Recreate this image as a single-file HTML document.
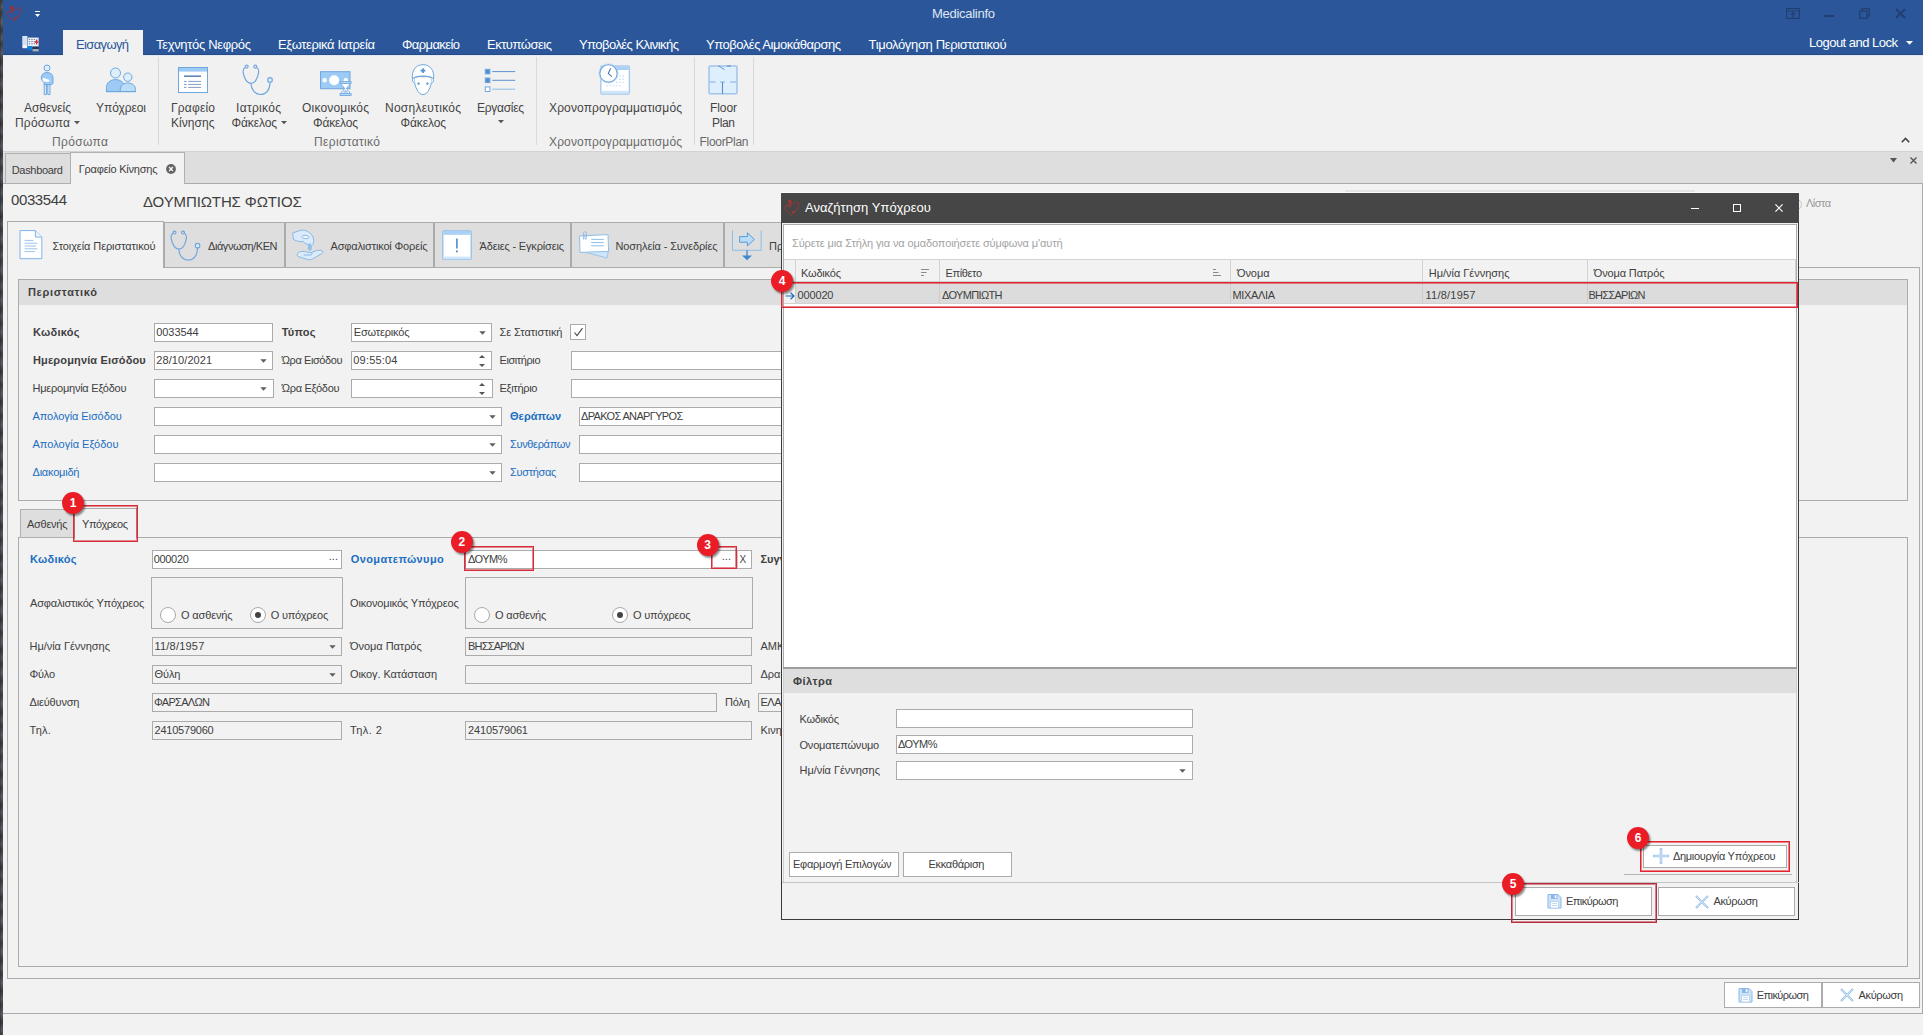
<!DOCTYPE html>
<html lang="el"><head><meta charset="utf-8"><title>Medicalinfo</title>
<style>
html,body{margin:0;padding:0;}
body{width:1923px;height:1035px;overflow:hidden;position:relative;background:#f2f2f2;font-family:"Liberation Sans", sans-serif;}
.a{position:absolute;box-sizing:border-box;}
.t{position:absolute;white-space:pre;line-height:1;font-family:"Liberation Sans", sans-serif;}

</style></head><body>
<div class="a" style="left:0px;top:0px;width:3px;height:1035px;background:#34373b;background-image:repeating-linear-gradient(180deg,#3a3c40 0,#55585d 7px,#3b3d41 13px,#5a5d62 22px,#35373b 31px);"></div>
<div class="a" style="left:0px;top:0px;width:1px;height:1035px;background:rgba(20,20,22,.25);"></div>
<div class="a" style="left:3px;top:0px;width:1920px;height:55px;background:#2b579a;"></div>
<svg class="a" style="left:6px;top:5px;" width="17" height="17" viewBox="0 0 17 17"><g fill="none" stroke="#b52a2e" stroke-width="0.9" stroke-linecap="round" opacity="0.85"><path d="M7.5 15.8 C3.5 13 0.6 10 1.2 7.6 C1.8 5.6 4.6 5.8 6 7.2"/><path d="M7.5 15.8 C11.5 12.5 15.2 8.2 14.8 4.6 C14.4 2.4 11.6 2.6 10.4 4"/><path d="M2 6.8 L6.8 6 L10.2 3.6 M6.6 6.2 L5.8 8.6"/><ellipse cx="5.9" cy="2.9" rx="1.7" ry="2.3" transform="rotate(-25 5.9 2.9)" fill="#c0281f" stroke="none"/><circle cx="9.4" cy="13.3" r="1.2" fill="#b52a2e" stroke="none"/><path d="M9.6 13 L12 11.2"/></g></svg>
<div class="a" style="left:35px;top:11px;width:5px;height:1px;background:#fff;"></div>
<svg class="a" style="left:35px;top:14px;" width="5" height="3" viewBox="0 0 5 3"><path d="M0 0 H5 L2.5 3 Z" fill="#fff"/></svg>
<span class="t" style="left:932px;top:7px;font-size:13px;color:#dfe6f2;letter-spacing:-0.277px;">Medicalinfo</span>
<svg class="a" style="left:1786px;top:8px;" width="14" height="11" viewBox="0 0 14 11"><g fill="none" stroke="#223f73" stroke-width="1.2"><rect x="0.6" y="0.6" width="12.8" height="9.8"/><path d="M0.6 3 H13.4 M7 9.5 V4.5 M4.8 6.6 L7 4.5 L9.2 6.6"/></g></svg>
<div class="a" style="left:1824px;top:15px;width:10px;height:2px;background:#223f73;"></div>
<svg class="a" style="left:1859px;top:8px;" width="11" height="11" viewBox="0 0 11 11"><g fill="none" stroke="#223f73" stroke-width="1.3"><rect x="0.7" y="3" width="7.3" height="7.3"/><path d="M3 3 V0.7 H10.3 V8 H8"/></g></svg>
<svg class="a" style="left:1895px;top:8px;" width="11" height="11" viewBox="0 0 11 11"><path d="M1 1 L10 10 M10 1 L1 10" stroke="#223f73" stroke-width="2" fill="none"/></svg>
<div class="a" style="left:63px;top:30px;width:80px;height:26px;background:#f1f1f1;"></div>
<svg class="a" style="left:22px;top:35px;" width="18" height="17" viewBox="0 0 18 17"><rect x="0.3" y="1" width="5.2" height="12.2" rx="0.8" fill="#e3ebf7"/><path d="M1 3 H4.8 M1 5 H4.8 M1 7 H4.8 M1 9 H4.8" stroke="#b9c9e4" stroke-width="0.7"/><rect x="1" y="10.6" width="3.6" height="1.6" fill="#fff"/><rect x="6" y="2.6" width="10.6" height="9" fill="#eef2fa"/><path d="M6.8 4.4 H13 M6.8 6.6 H13 M6.8 8.8 H13" stroke="#5b6f9a" stroke-width="0.9" stroke-dasharray="1.4 1.1"/><path d="M12.8 7 H16.4 M14.6 4.6 V9.4" stroke="#e02430" stroke-width="1.3"/><rect x="5.6" y="11" width="4.6" height="4" fill="#0a80da"/><rect x="10.6" y="11.6" width="6" height="2.4" fill="#2a3350"/><rect x="10.6" y="14" width="6" height="2.4" fill="#a9adb6"/></svg>
<span class="t" style="left:76px;top:38px;font-size:13px;color:#2b579a;letter-spacing:-0.641px;">Εισαγωγή</span>
<span class="t" style="left:156px;top:38px;font-size:13px;color:#ffffff;letter-spacing:-0.329px;">Τεχνητός Νεφρός</span>
<span class="t" style="left:278px;top:38px;font-size:13px;color:#ffffff;letter-spacing:-0.375px;">Εξωτερικά Ιατρεία</span>
<span class="t" style="left:402px;top:38px;font-size:13px;color:#ffffff;letter-spacing:-0.588px;">Φαρμακείο</span>
<span class="t" style="left:487px;top:38px;font-size:13px;color:#ffffff;letter-spacing:-0.481px;">Εκτυπώσεις</span>
<span class="t" style="left:579px;top:38px;font-size:13px;color:#ffffff;letter-spacing:-0.548px;">Υποβολές Κλινικής</span>
<span class="t" style="left:706px;top:38px;font-size:13px;color:#ffffff;letter-spacing:-0.470px;">Υποβολές Αιμοκάθαρσης</span>
<span class="t" style="left:868.6px;top:38px;font-size:13px;color:#ffffff;letter-spacing:-0.346px;">Τιμολόγηση Περιστατικού</span>
<span class="t" style="left:1809px;top:36px;font-size:13px;color:#ffffff;letter-spacing:-0.510px;">Logout and Lock</span>
<svg class="a" style="left:1906px;top:41px;" width="7" height="4" viewBox="0 0 7 4"><path d="M0 0 H7 L3.5 3.8 Z" fill="#fff"/></svg>
<div class="a" style="left:3px;top:55px;width:1920px;height:96px;background:#f1f1f1;"></div>
<div class="a" style="left:3px;top:54px;width:1920px;height:1px;background:#2a4b82;"></div>
<div class="a" style="left:3px;top:55px;width:1920px;height:1px;background:#dfe8f6;"></div>
<div class="a" style="left:3px;top:56px;width:1920px;height:1px;background:#eef1f6;"></div>
<div class="a" style="left:63px;top:54px;width:80px;height:3px;background:#f1f1f1;"></div>
<div class="a" style="left:3px;top:151px;width:1920px;height:1px;background:#d2d2d2;"></div>
<div class="a" style="left:158px;top:57px;width:1px;height:88px;background:#dadada;"></div>
<div class="a" style="left:536px;top:57px;width:1px;height:88px;background:#dadada;"></div>
<div class="a" style="left:694px;top:57px;width:1px;height:88px;background:#dadada;"></div>
<div class="a" style="left:753px;top:57px;width:1px;height:88px;background:#dadada;"></div>
<span class="t" style="left:24px;top:102px;font-size:12px;color:#444444;letter-spacing:-0.033px;">Ασθενείς</span>
<span class="t" style="left:15px;top:117px;font-size:12px;color:#444444;letter-spacing:0.195px;">Πρόσωπα</span>
<svg class="a" style="left:74px;top:121px;" width="6" height="4" viewBox="0 0 6 4"><path d="M0 0 H6 L3 3.2 Z" fill="#555"/></svg>
<span class="t" style="left:96px;top:102px;font-size:12px;color:#444444;letter-spacing:-0.065px;">Υπόχρεοι</span>
<span class="t" style="left:171px;top:102px;font-size:12px;color:#444444;letter-spacing:0.193px;">Γραφείο</span>
<span class="t" style="left:171px;top:117px;font-size:12px;color:#444444;letter-spacing:0.047px;">Κίνησης</span>
<span class="t" style="left:236px;top:102px;font-size:12px;color:#444444;letter-spacing:0.310px;">Ιατρικός</span>
<span class="t" style="left:231.5px;top:117px;font-size:12px;color:#444444;letter-spacing:-0.107px;">Φάκελος</span>
<svg class="a" style="left:281px;top:121px;" width="6" height="4" viewBox="0 0 6 4"><path d="M0 0 H6 L3 3.2 Z" fill="#555"/></svg>
<span class="t" style="left:302px;top:102px;font-size:12px;color:#444444;letter-spacing:0.191px;">Οικονομικός</span>
<span class="t" style="left:313px;top:117px;font-size:12px;color:#444444;letter-spacing:-0.190px;">Φάκελος</span>
<span class="t" style="left:385px;top:102px;font-size:12px;color:#444444;letter-spacing:0.267px;">Νοσηλευτικός</span>
<span class="t" style="left:400.5px;top:117px;font-size:12px;color:#444444;letter-spacing:-0.107px;">Φάκελος</span>
<span class="t" style="left:477px;top:102px;font-size:12px;color:#444444;letter-spacing:-0.283px;">Εργασίες</span>
<svg class="a" style="left:497.5px;top:120px;" width="6" height="4" viewBox="0 0 6 4"><path d="M0 0 H6 L3 3.2 Z" fill="#555"/></svg>
<span class="t" style="left:549px;top:102px;font-size:12px;color:#444444;letter-spacing:0.132px;">Χρονοπρογραμματισμός</span>
<span class="t" style="left:710px;top:102px;font-size:12px;color:#444444;letter-spacing:-0.086px;">Floor</span>
<span class="t" style="left:712px;top:117px;font-size:12px;color:#444444;letter-spacing:-0.344px;">Plan</span>
<span class="t" style="left:52px;top:136px;font-size:12px;color:#6a6a6a;letter-spacing:0.362px;">Πρόσωπα</span>
<span class="t" style="left:314px;top:136px;font-size:12px;color:#6a6a6a;letter-spacing:0.364px;">Περιστατικό</span>
<span class="t" style="left:549px;top:136px;font-size:12px;color:#6a6a6a;letter-spacing:0.132px;">Χρονοπρογραμματισμός</span>
<span class="t" style="left:699.5px;top:136px;font-size:12px;color:#6a6a6a;letter-spacing:-0.295px;">FloorPlan</span>
<svg class="a" style="left:1901px;top:137px;" width="9" height="6" viewBox="0 0 9 6"><path d="M0.8 5.2 L4.5 1.5 L8.2 5.2" stroke="#444" stroke-width="1.6" fill="none"/></svg>
<svg class="a" style="left:38px;top:62px;" width="18" height="35" viewBox="38 62 18 35"><g stroke="#6ea6de" stroke-width="1" stroke-linejoin="round">
<circle cx="47" cy="68" r="3" fill="#ddeefc"/>
<path d="M44.2 84 V94.6 H46.4 V85 H47.8 V94.6 H50 V84 Z" fill="#ddeefc"/>
<path d="M41.3 78 C41.3 74.5 43.5 72.6 47 72.6 C50.8 72.6 53 74.5 53 78 V82.5 C53 84 52 84.6 51 84.6 H44.2 V82 C42.4 81.6 41.3 80.2 41.3 78 Z" fill="#9ecbf5"/>
<path d="M42.6 79.6 C42.6 78.4 43.6 77.8 44.6 78.3 L49 79.8 C49.8 80.2 49.6 81.8 48.6 81.8 H44.6 C43.4 81.8 42.6 81 42.6 79.6 Z" fill="#fff" stroke="none"/>
</g></svg>
<svg class="a" style="left:104px;top:66px;" width="34" height="28" viewBox="104 66 34 28"><g stroke="#6ea6de" stroke-width="1">
<circle cx="115.5" cy="73" r="5" fill="#ddeefc"/>
<path d="M106.4 91.5 V87.5 C106.4 82.8 110.3 79.6 115.5 79.6 C120.7 79.6 124.6 82.8 124.6 87.5 V91.5 Z" fill="#9ecbf5"/>
<circle cx="127.8" cy="77.2" r="4.2" fill="#ddeefc"/>
<path d="M120.3 91.5 V89.5 C120.3 85.5 123.5 83 127.9 83 C132.3 83 135.4 85.5 135.4 89.5 V91.5 Z" fill="#b9dcf9"/>
<path d="M106 91.6 H135.8" stroke-width="1.2"/>
</g></svg>
<svg class="a" style="left:176px;top:65px;" width="34" height="30" viewBox="176 65 34 30"><rect x="178.5" y="67.5" width="29" height="25" fill="#fff" stroke="#6ea6de" stroke-width="1"/>
<rect x="179" y="68" width="28" height="3.6" fill="#9ecbf5"/>
<path d="M184 76.2 H201" stroke="#5f86b8" stroke-width="1.6"/>
<path d="M184 81.4 H186.6 M188.2 81.4 H201 M184 84.4 H186.6 M188.2 84.4 H201 M184 87.4 H186.6 M188.2 87.4 H201" stroke="#7f9fc8" stroke-width="1"/></svg>
<svg class="a" style="left:242.2px;top:64px;" width="32.0" height="32.0" viewBox="0 0 32 32"><g fill="none" stroke="#6ea6de" stroke-width="1.15" stroke-linecap="round">
<circle cx="4.6" cy="2.6" r="1.5"/><circle cx="13.2" cy="2.6" r="1.5"/>
<path d="M3.2 3.4 C0.8 4.5 0.8 8.5 2.2 12.5 C3.6 16.5 6 19.3 9 19.3 C12 19.3 14.3 16.5 15.6 12.5 C17 8.5 17 4.5 14.6 3.4"/>
<path d="M9 19.3 C9 25.5 13 30.5 18.5 30.5 C24 30.5 28 26 28 18.3"/>
<circle cx="28" cy="15.9" r="2.3" fill="#ddeefc"/>
</g></svg>
<svg class="a" style="left:318px;top:69px;" width="36" height="29" viewBox="318 69 36 29"><rect x="320.5" y="71.7" width="29.5" height="17" fill="#9ecbf5" stroke="#6ea6de" stroke-width="1"/>
<circle cx="334.2" cy="80.2" r="5" fill="#fff"/><circle cx="324.6" cy="80.2" r="2.2" fill="#fff"/><circle cx="345.8" cy="80.2" r="2.2" fill="#fff"/>
<path d="M340 81.6 H351.2 V83.4 H340 Z M340 93.6 H351.2 V95.5 H340 Z" fill="#cfe5fa" stroke="#6ea6de" stroke-width="0.9"/>
<path d="M341.4 83.4 H349.8 C349.8 86.4 346.6 87 346.6 88.5 C346.6 90 349.8 90.6 349.8 93.6 H341.4 C341.4 90.6 344.6 90 344.6 88.5 C344.6 87 341.4 86.4 341.4 83.4 Z" fill="#fff" stroke="#6ea6de" stroke-width="0.9"/>
<path d="M343 92.8 C343.5 91 345 90.6 345.6 89.6 C346.2 90.6 347.7 91 348.2 92.8 Z" fill="#9ecbf5"/></svg>
<svg class="a" style="left:409px;top:62px;" width="28" height="35" viewBox="409 62 28 35"><g stroke="#6ea6de" stroke-width="1" fill="none" stroke-linejoin="round">
<path d="M414.3 78.5 C414.3 86 418 94.6 423 94.6 C428 94.6 431.7 86 431.7 78.5" fill="#fff"/>
<path d="M414.3 77.5 C412 77.2 411.8 82.5 414.6 83.2 M431.7 77.5 C434 77.2 434.2 82.5 431.4 83.2" fill="#fff"/>
<path d="M412.4 78.6 C411.6 70 416 64.7 423 64.7 C430 64.7 434.4 70 433.6 78.6 L431.8 77.8 C430 75.8 416 75.8 414.2 77.8 Z" fill="#fff"/>
<path d="M414.2 77.6 C418 75.6 428 75.6 431.8 77.6" />
<path d="M420.6 70.6 H425.4 M423 68.2 V73" stroke-width="1.6" stroke="#4f8fd0"/>
<circle cx="418.6" cy="83.6" r="0.9" fill="#6ea6de"/><circle cx="427.4" cy="83.6" r="0.9" fill="#6ea6de"/>
</g></svg>
<svg class="a" style="left:483px;top:67px;" width="34" height="27" viewBox="483 67 34 27"><g stroke="#6ea6de" stroke-width="1">
<rect x="485.3" y="69.3" width="4.6" height="4.6" fill="#4f8fd0"/><rect x="485.3" y="78" width="4.6" height="4.6" fill="#4f8fd0"/><rect x="485.3" y="86.9" width="4.6" height="4.6" fill="#fff"/>
<path d="M492.2 71.6 H515.2 M492.2 80.3 H515.2" stroke="#5f93cf"/><path d="M492.2 89.2 H515.2" stroke="#8fbdea"/>
</g></svg>
<svg class="a" style="left:597px;top:62px;" width="36" height="35" viewBox="597 62 36 35"><rect x="600.8" y="66" width="28.6" height="28" rx="1.2" fill="#fff" stroke="#a9c9ee" stroke-width="1.4"/>
<rect x="601.5" y="66.6" width="27.2" height="3.4" fill="#a9d0f5"/><rect x="601.5" y="90.8" width="27.2" height="2.6" fill="#cfe5fa"/>
<g fill="#d5e6f8"><rect x="619.2" y="75.2" width="1.6" height="1.6"/><rect x="622.4" y="75.2" width="1.6" height="1.6"/>
<rect x="619.2" y="78.4" width="1.6" height="1.6"/><rect x="622.4" y="78.4" width="1.6" height="1.6"/>
<rect x="616" y="81.6" width="1.6" height="1.6"/><rect x="619.2" y="81.6" width="1.6" height="1.6"/><rect x="622.4" y="81.6" width="1.6" height="1.6"/>
<rect x="606.2" y="84.8" width="1.6" height="1.6"/><rect x="609.4" y="84.8" width="1.6" height="1.6"/><rect x="612.6" y="84.8" width="1.6" height="1.6"/><rect x="615.8" y="84.8" width="1.6" height="1.6"/><rect x="619" y="84.8" width="1.6" height="1.6"/></g>
<circle cx="608.5" cy="73.4" r="8.8" fill="#fff" stroke="#6ea6de" stroke-width="1.4"/>
<circle cx="608.5" cy="73.4" r="9.6" fill="none" stroke="#bcd9f6" stroke-width="0.8"/>
<path d="M610.6 68.2 L608.3 73.4 L611.8 76.6" fill="none" stroke="#4a78b0" stroke-width="1.1"/></svg>
<svg class="a" style="left:706px;top:63px;" width="34" height="34" viewBox="706 63 34 34"><rect x="709" y="66" width="28" height="27.8" rx="1" fill="#ddeefc" stroke="#a3c4ea" stroke-width="1.5"/>
<path d="M709 82 H715.5 M720 82 H725 M730 82 H737" stroke="#a3c4ea" stroke-width="1.6"/>
<path d="M722.5 82 V94" stroke="#5f8cc8" stroke-width="1.1"/>
<path d="M718 65.6 L724.7 69.6" stroke="#5f8cc8" stroke-width="0.9"/><path d="M726.8 66 H731" stroke="#7b9fd0" stroke-width="1.6"/></svg>
<div class="a" style="left:3px;top:152px;width:1920px;height:32px;background:#dedede;"></div>
<div class="a" style="left:3px;top:183px;width:1920px;height:1px;background:#ababab;"></div>
<div class="a" style="left:5px;top:153px;width:66px;height:31px;background:#dedede;border:1px solid #b0b0b0;"></div>
<span class="t" style="left:11.75px;top:165px;font-size:11px;color:#404040;letter-spacing:-0.322px;">Dashboard</span>
<div class="a" style="left:70px;top:152px;width:115px;height:32px;background:#f2f2f2;border:1px solid #b0b0b0;border-bottom:none;"></div>
<span class="t" style="left:78.75px;top:164px;font-size:11px;color:#404040;letter-spacing:-0.228px;">Γραφείο Κίνησης</span>
<svg class="a" style="left:166px;top:164px;" width="10" height="10" viewBox="0 0 10 10"><circle cx="5" cy="5" r="4.9" fill="#636363"/><path d="M3.1 3.1 L6.9 6.9 M6.9 3.1 L3.1 6.9" stroke="#f2f2f2" stroke-width="1.4"/></svg>
<svg class="a" style="left:1890px;top:158px;" width="7" height="5" viewBox="0 0 7 5"><path d="M0 0 H7 L3.5 4.5 Z" fill="#555"/></svg>
<svg class="a" style="left:1910px;top:157px;" width="7" height="7" viewBox="0 0 7 7"><path d="M0.5 0.5 L6.5 6.5 M6.5 0.5 L0.5 6.5" stroke="#555" stroke-width="1.4"/></svg>
<div class="a" style="left:3px;top:184px;width:1920px;height:851px;background:#f2f2f2;"></div>
<div class="a" style="left:1922px;top:184px;width:1px;height:830px;background:#ababab;"></div>
<span class="t" style="left:11px;top:192px;font-size:15px;color:#404040;letter-spacing:-0.401px;">0033544</span>
<span class="t" style="left:143px;top:194px;font-size:15px;color:#404040;letter-spacing:-0.109px;">ΔΟΥΜΠΙΩΤΗΣ ΦΩΤΙΟΣ</span>
<div class="a" style="left:1345px;top:190px;width:350px;height:3px;background:#e4e4e4;"></div>
<div class="a" style="left:1790.5px;top:199px;width:11px;height:11px;background:#f2f2f2;border:1px solid #c4c4c4;border-radius:50%;"></div>
<span class="t" style="left:1806px;top:198px;font-size:11px;color:#9a9a9a;letter-spacing:-0.535px;">Λίστα</span>
<div class="a" style="left:7px;top:267px;width:1913px;height:712px;background:#f2f2f2;border:1px solid #ababab;"></div>
<div class="a" style="left:164px;top:222px;width:121px;height:46px;background:#dedede;border:1px solid #ababab;"></div>
<div class="a" style="left:285px;top:222px;width:149px;height:46px;background:#dedede;border:1px solid #ababab;"></div>
<div class="a" style="left:434px;top:222px;width:137px;height:46px;background:#dedede;border:1px solid #ababab;"></div>
<div class="a" style="left:571px;top:222px;width:153px;height:46px;background:#dedede;border:1px solid #ababab;"></div>
<div class="a" style="left:724px;top:222px;width:76px;height:46px;background:#dedede;border:1px solid #ababab;"></div>
<div class="a" style="left:7px;top:221px;width:157px;height:47px;background:#f2f2f2;border:1px solid #ababab;border-bottom:none;"></div>
<span class="t" style="left:52.5px;top:241px;font-size:11px;color:#404040;letter-spacing:-0.087px;">Στοιχεία Περιστατικού</span>
<span class="t" style="left:208px;top:241px;font-size:11px;color:#404040;letter-spacing:-0.439px;">Διάγνωση/ΚΕΝ</span>
<span class="t" style="left:330.5px;top:241px;font-size:11px;color:#404040;letter-spacing:-0.163px;">Ασφαλιστικοί Φορείς</span>
<span class="t" style="left:479.5px;top:241px;font-size:11px;color:#404040;letter-spacing:-0.164px;">Άδειες - Εγκρίσεις</span>
<span class="t" style="left:615.5px;top:241px;font-size:11px;color:#404040;letter-spacing:-0.116px;">Νοσηλεία - Συνεδρίες</span>
<span class="t" style="left:769px;top:241px;font-size:11px;color:#404040;">Πρ</span>
<svg class="a" style="left:18px;top:228px;" width="27" height="34" viewBox="18 228 27 34"><path d="M20 230.6 H35.4 L41.8 237 V258.7 H20 Z" fill="#fff" stroke="#7fb2e8" stroke-width="1"/>
<path d="M35.4 230.6 V237 H41.8" fill="#eef6fd" stroke="#7fb2e8" stroke-width="1"/>
<path d="M24.6 240.4 H33.5 M24.6 243.2 H37.4 M24.6 246 H36 M24.6 248.8 H37.4 M24.6 251.6 H35" stroke="#8fbdea" stroke-width="0.9"/></svg>
<svg class="a" style="left:170.2px;top:229.6px;" width="31.52" height="31.52" viewBox="0 0 32 32"><g fill="none" stroke="#6ea6de" stroke-width="1.15" stroke-linecap="round">
<circle cx="4.6" cy="2.6" r="1.5"/><circle cx="13.2" cy="2.6" r="1.5"/>
<path d="M3.2 3.4 C0.8 4.5 0.8 8.5 2.2 12.5 C3.6 16.5 6 19.3 9 19.3 C12 19.3 14.3 16.5 15.6 12.5 C17 8.5 17 4.5 14.6 3.4"/>
<path d="M9 19.3 C9 25.5 13 30.5 18.5 30.5 C24 30.5 28 26 28 18.3"/>
<circle cx="28" cy="15.9" r="2.3" fill="#ddeefc"/>
</g></svg>
<svg class="a" style="left:290px;top:227px;" width="36" height="36" viewBox="290 227 36 36"><g stroke="#7fb2e8" stroke-width="0.9" fill="#dcebfa" stroke-linejoin="round">
<path d="M292.6 232.9 L300.5 230.4 C304 229.6 308.5 231 311.2 234.2 C313.2 236.6 314.2 239.6 313.4 243.2 C313 244.6 312.2 245.2 311.2 245.3 V249 C311.2 250.8 308.6 250.8 308.6 249 V244.4 C306 244 304.6 243.2 303.2 241.6 C299.8 241.8 296.6 241.2 293.6 239.6 Z"/>
<ellipse cx="305.4" cy="237" rx="3.8" ry="1.6" fill="#f3f8fe" transform="rotate(6 305.4 237)"/>
<path d="M308.9 243.6 H310.9 V249 C310.9 250.2 308.9 250.2 308.9 249 Z" fill="#8ec0f0" stroke="none"/>
<path d="M297.2 254.4 C297.4 252.4 300.6 251.2 304.4 251.5 C307 251.7 309 252.9 311.6 252.6 L316.4 250.6 C318.6 250 321.8 250.2 322.8 251.4 C323.2 252.2 322.6 253 321.6 253.6 L312.6 258.9 C311 259.9 308.6 259.9 306.8 259.3 L299 256.8 C297.8 256.4 297.1 255.6 297.2 254.4 Z"/>
<path d="M303.6 255 H310.4 C312.4 255 312.6 253 311.4 252.7" fill="none"/>
</g></svg>
<svg class="a" style="left:440px;top:228px;" width="34" height="34" viewBox="440 228 34 34"><rect x="442.8" y="231" width="28.4" height="28.2" rx="1.2" fill="#fff" stroke="#93bfec" stroke-width="1.3"/>
<rect x="443.5" y="231.6" width="27" height="3.2" fill="#a9d0f5"/><rect x="443.5" y="256.6" width="27" height="2.2" fill="#cfe5fa"/>
<path d="M456.9 238.6 V248.6" stroke="#5a90d2" stroke-width="1.7"/><circle cx="456.9" cy="251.4" r="1.05" fill="#5a90d2"/></svg>
<svg class="a" style="left:577px;top:229px;" width="35" height="32" viewBox="577 229 35 32"><path d="M580.5 251 L607 258 L609 248 Z" fill="#cfe5fa" stroke="#8fbdea" stroke-width="0.8"/>
<path d="M579.5 236 L608 234.6 L608.6 251.4 L580 252.4 Z" fill="#fff" stroke="#8fbdea" stroke-width="1"/>
<path d="M591.2 239.4 H603.8 M591.2 242.6 H603.8 M591.2 245.8 H603.8" stroke="#8fbdea" stroke-width="1"/>
<path d="M583.4 239.6 V233.4 C583.4 231.2 586.4 231.2 586.4 233.4 V238.4 C586.4 239.8 584.9 239.8 584.9 238.4 V234.6" fill="none" stroke="#7fb2e8" stroke-width="0.8"/></svg>
<svg class="a" style="left:730px;top:228px;" width="34" height="34" viewBox="730 228 34 34"><path d="M732.5 230.3 V250.3 H761.2 V230.3" fill="none" stroke="#8fbdea" stroke-width="1"/>
<path d="M739.6 236.6 H747.4 V232.8 L754.4 239.4 L747.4 246 V242.2 H739.6 Z" fill="#b9dcf9" stroke="#5b9bd5" stroke-width="1"/>
<path d="M747 250.3 V256" stroke="#3f87cf" stroke-width="1.3"/><path d="M742 255.4 H752 L747 260.2 Z" fill="#3f87cf"/></svg>
<div class="a" style="left:18px;top:279px;width:1890px;height:222px;background:#f2f2f2;border:1px solid #ababab;"></div>
<div class="a" style="left:19px;top:280px;width:1888px;height:24.5px;background:#dedede;"></div>
<span class="t" style="left:28px;top:287px;font-size:11px;color:#404040;font-weight:bold;letter-spacing:0.662px;">Περιστατικό</span>
<span class="t" style="left:33px;top:327px;font-size:11px;color:#404040;font-weight:bold;letter-spacing:0.263px;">Κωδικός</span>
<div class="a" style="left:154px;top:323px;width:119px;height:19px;background:#fff;border:1px solid #ababab;"></div>
<span class="t" style="left:156.2px;top:327px;font-size:11px;color:#404040;letter-spacing:-0.055px;">0033544</span>
<span class="t" style="left:281.75px;top:327px;font-size:11px;color:#404040;font-weight:bold;letter-spacing:0.219px;">Τύπος</span>
<div class="a" style="left:351px;top:323px;width:141px;height:19px;background:#fff;border:1px solid #ababab;"></div>
<span class="t" style="left:353.75px;top:327px;font-size:11px;color:#404040;letter-spacing:-0.172px;">Εσωτερικός</span>
<svg class="a" style="left:478.5px;top:330.5px;" width="7" height="4" viewBox="0 0 7 4"><path d="M0.3 0.2 H6.7 L3.5 3.7 Z" fill="#5e5e5e"/></svg>
<span class="t" style="left:499.5px;top:327px;font-size:11px;color:#404040;letter-spacing:-0.048px;">Σε Στατιστική</span>
<div class="a" style="left:570px;top:324px;width:16px;height:16px;background:#fff;border:1px solid #ababab;"></div>
<svg class="a" style="left:572.5px;top:327px;" width="11" height="10" viewBox="0 0 11 10"><path d="M1.5 5.5 L4 8.5 L9.5 1.2" stroke="#444" stroke-width="1.1" fill="none"/></svg>
<span class="t" style="left:33px;top:355px;font-size:11px;color:#404040;font-weight:bold;letter-spacing:0.144px;">Ημερομηνία Εισόδου</span>
<div class="a" style="left:154px;top:351px;width:119px;height:19px;background:#fff;border:1px solid #ababab;"></div>
<span class="t" style="left:156.2px;top:355px;font-size:11px;color:#404040;letter-spacing:0.104px;">28/10/2021</span>
<svg class="a" style="left:259.5px;top:358.5px;" width="7" height="4" viewBox="0 0 7 4"><path d="M0.3 0.2 H6.7 L3.5 3.7 Z" fill="#5e5e5e"/></svg>
<span class="t" style="left:281.75px;top:355px;font-size:11px;color:#404040;letter-spacing:-0.416px;">Ώρα Εισόδου</span>
<div class="a" style="left:351px;top:351px;width:141px;height:19px;background:#fff;border:1px solid #ababab;"></div>
<span class="t" style="left:353.25px;top:355px;font-size:11px;color:#404040;letter-spacing:0.203px;">09:55:04</span>
<svg class="a" style="left:479px;top:354.5px;" width="6" height="3" viewBox="0 0 6 3"><path d="M0 3 H6 L3 0 Z" fill="#555"/></svg>
<svg class="a" style="left:479px;top:363.5px;" width="6" height="3" viewBox="0 0 6 3"><path d="M0 0 H6 L3 3 Z" fill="#555"/></svg>
<span class="t" style="left:499.5px;top:355px;font-size:11px;color:#404040;letter-spacing:-0.412px;">Εισιτήριο</span>
<div class="a" style="left:571px;top:351px;width:240px;height:19px;background:#fff;border:1px solid #ababab;"></div>
<span class="t" style="left:32.5px;top:383px;font-size:11px;color:#404040;letter-spacing:-0.232px;">Ημερομηνία Εξόδου</span>
<div class="a" style="left:154px;top:379px;width:119.5px;height:19px;background:#fff;border:1px solid #ababab;"></div>
<svg class="a" style="left:259.5px;top:386.5px;" width="7" height="4" viewBox="0 0 7 4"><path d="M0.3 0.2 H6.7 L3.5 3.7 Z" fill="#5e5e5e"/></svg>
<span class="t" style="left:281.75px;top:383px;font-size:11px;color:#404040;letter-spacing:-0.283px;">Ώρα Εξόδου</span>
<div class="a" style="left:351px;top:379px;width:141.5px;height:19px;background:#fff;border:1px solid #ababab;"></div>
<svg class="a" style="left:479px;top:382.5px;" width="6" height="3" viewBox="0 0 6 3"><path d="M0 3 H6 L3 0 Z" fill="#555"/></svg>
<svg class="a" style="left:479px;top:391.5px;" width="6" height="3" viewBox="0 0 6 3"><path d="M0 0 H6 L3 3 Z" fill="#555"/></svg>
<span class="t" style="left:499.5px;top:383px;font-size:11px;color:#404040;letter-spacing:-0.286px;">Εξιτήριο</span>
<div class="a" style="left:571px;top:379px;width:240px;height:19px;background:#fff;border:1px solid #ababab;"></div>
<span class="t" style="left:32.5px;top:411px;font-size:11px;color:#1b6ec2;letter-spacing:-0.079px;">Απολογία Εισόδου</span>
<div class="a" style="left:154px;top:407px;width:348px;height:19px;background:#fff;border:1px solid #ababab;"></div>
<svg class="a" style="left:488.5px;top:414.5px;" width="7" height="4" viewBox="0 0 7 4"><path d="M0.3 0.2 H6.7 L3.5 3.7 Z" fill="#5e5e5e"/></svg>
<span class="t" style="left:510px;top:411px;font-size:11px;color:#1b6ec2;font-weight:bold;letter-spacing:0.062px;">Θεράπων</span>
<div class="a" style="left:579px;top:407px;width:232px;height:19px;background:#fff;border:1px solid #ababab;"></div>
<span class="t" style="left:581px;top:411px;font-size:11px;color:#404040;letter-spacing:-0.654px;">ΔΡΑΚΟΣ ΑΝΑΡΓΥΡΟΣ</span>
<span class="t" style="left:32.5px;top:439px;font-size:11px;color:#1b6ec2;letter-spacing:0.011px;">Απολογία Εξόδου</span>
<div class="a" style="left:154px;top:435px;width:348px;height:19px;background:#fff;border:1px solid #ababab;"></div>
<svg class="a" style="left:488.5px;top:442.5px;" width="7" height="4" viewBox="0 0 7 4"><path d="M0.3 0.2 H6.7 L3.5 3.7 Z" fill="#5e5e5e"/></svg>
<span class="t" style="left:510px;top:439px;font-size:11px;color:#1b6ec2;letter-spacing:-0.332px;">Συνθεράπων</span>
<div class="a" style="left:579px;top:435px;width:232px;height:19px;background:#fff;border:1px solid #ababab;"></div>
<span class="t" style="left:32.5px;top:467px;font-size:11px;color:#1b6ec2;letter-spacing:-0.209px;">Διακομιδή</span>
<div class="a" style="left:154px;top:463px;width:348px;height:19px;background:#fff;border:1px solid #ababab;"></div>
<svg class="a" style="left:488.5px;top:470.5px;" width="7" height="4" viewBox="0 0 7 4"><path d="M0.3 0.2 H6.7 L3.5 3.7 Z" fill="#5e5e5e"/></svg>
<span class="t" style="left:510px;top:467px;font-size:11px;color:#1b6ec2;letter-spacing:-0.326px;">Συστήσας</span>
<div class="a" style="left:579px;top:463px;width:232px;height:19px;background:#fff;border:1px solid #ababab;"></div>
<div class="a" style="left:18px;top:537px;width:1890px;height:430px;background:#f2f2f2;border:1px solid #ababab;"></div>
<div class="a" style="left:20px;top:509px;width:55px;height:29px;background:#dedede;border:1px solid #b0b0b0;"></div>
<span class="t" style="left:27px;top:519px;font-size:11px;color:#404040;letter-spacing:-0.263px;">Ασθενής</span>
<div class="a" style="left:74px;top:508px;width:63px;height:30px;background:#f2f2f2;border:1px solid #ababab;border-bottom:none;"></div>
<span class="t" style="left:82px;top:519px;font-size:11px;color:#404040;letter-spacing:-0.444px;">Υπόχρεος</span>
<span class="t" style="left:30px;top:554px;font-size:11px;color:#1b6ec2;font-weight:bold;letter-spacing:0.263px;">Κωδικός</span>
<div class="a" style="left:152px;top:550px;width:190px;height:19px;background:#fff;border:1px solid #ababab;"></div>
<span class="t" style="left:153.8px;top:554px;font-size:11px;color:#404040;letter-spacing:-0.344px;">000020</span>
<span class="t" style="left:328.8px;top:551px;font-size:11px;color:#444;">...</span>
<span class="t" style="left:350.75px;top:554px;font-size:11px;color:#1b6ec2;font-weight:bold;letter-spacing:0.383px;">Ονοματεπώνυμο</span>
<div class="a" style="left:465px;top:550px;width:287px;height:19px;background:#fff;border:1px solid #ababab;"></div>
<span class="t" style="left:468px;top:554px;font-size:11px;color:#404040;letter-spacing:-0.527px;">ΔΟΥΜ%</span>
<span class="t" style="left:721.8px;top:551px;font-size:11px;color:#444;">...</span>
<div class="a" style="left:737px;top:551px;width:1px;height:17px;background:#c8c8c8;"></div>
<span class="t" style="left:739.5px;top:555px;font-size:10px;color:#444;">X</span>
<span class="t" style="left:760.5px;top:554px;font-size:11px;color:#404040;font-weight:bold;">Συγγ</span>
<span class="t" style="left:30px;top:598px;font-size:11px;color:#404040;letter-spacing:-0.182px;">Ασφαλιστικός Υπόχρεος</span>
<div class="a" style="left:151px;top:577px;width:192px;height:52px;background:#f2f2f2;border:1px solid #ababab;"></div>
<div class="a" style="left:160px;top:607px;width:16px;height:16px;background:#fff;border:1px solid #a9a9a9;border-radius:50%;"></div>
<span class="t" style="left:181px;top:610px;font-size:11px;color:#404040;letter-spacing:-0.150px;">Ο ασθενής</span>
<div class="a" style="left:250.25px;top:607px;width:16px;height:16px;background:#fff;border:1px solid #a9a9a9;border-radius:50%;"></div>
<div class="a" style="left:255.25px;top:612px;width:6px;height:6px;background:#444;border-radius:50%;"></div>
<span class="t" style="left:270.75px;top:610px;font-size:11px;color:#404040;letter-spacing:-0.212px;">Ο υπόχρεος</span>
<span class="t" style="left:350px;top:598px;font-size:11px;color:#404040;letter-spacing:-0.152px;">Οικονομικός Υπόχρεος</span>
<div class="a" style="left:465px;top:577px;width:288px;height:52px;background:#f2f2f2;border:1px solid #ababab;"></div>
<div class="a" style="left:474px;top:607px;width:16px;height:16px;background:#fff;border:1px solid #a9a9a9;border-radius:50%;"></div>
<span class="t" style="left:495px;top:610px;font-size:11px;color:#404040;letter-spacing:-0.182px;">Ο ασθενής</span>
<div class="a" style="left:612px;top:607px;width:16px;height:16px;background:#fff;border:1px solid #a9a9a9;border-radius:50%;"></div>
<div class="a" style="left:617px;top:612px;width:6px;height:6px;background:#444;border-radius:50%;"></div>
<span class="t" style="left:633px;top:610px;font-size:11px;color:#404040;letter-spacing:-0.212px;">Ο υπόχρεος</span>
<span class="t" style="left:29.5px;top:641px;font-size:11px;color:#404040;letter-spacing:-0.036px;">Ημ/νία Γέννησης</span>
<div class="a" style="left:152px;top:637px;width:190px;height:19px;background:#f2f2f2;border:1px solid #ababab;"></div>
<span class="t" style="left:154.5px;top:641px;font-size:11px;color:#404040;letter-spacing:0.203px;">11/8/1957</span>
<svg class="a" style="left:329.0px;top:644.5px;" width="7" height="4" viewBox="0 0 7 4"><path d="M0.3 0.2 H6.7 L3.5 3.7 Z" fill="#5e5e5e"/></svg>
<span class="t" style="left:350px;top:641px;font-size:11px;color:#404040;letter-spacing:-0.043px;">Όνομα Πατρός</span>
<div class="a" style="left:465px;top:637px;width:287px;height:19px;background:#f2f2f2;border:1px solid #ababab;"></div>
<span class="t" style="left:468px;top:641px;font-size:11px;color:#404040;letter-spacing:-0.785px;">ΒΗΣΣΑΡΙΩΝ</span>
<span class="t" style="left:760.5px;top:641px;font-size:11px;color:#404040;">ΑΜΚΑ</span>
<span class="t" style="left:29.5px;top:669px;font-size:11px;color:#404040;letter-spacing:-0.250px;">Φύλο</span>
<div class="a" style="left:152px;top:665px;width:190px;height:19px;background:#f2f2f2;border:1px solid #ababab;"></div>
<span class="t" style="left:154.5px;top:669px;font-size:11px;color:#404040;letter-spacing:-0.068px;">Θύλη</span>
<svg class="a" style="left:329.0px;top:672.5px;" width="7" height="4" viewBox="0 0 7 4"><path d="M0.3 0.2 H6.7 L3.5 3.7 Z" fill="#5e5e5e"/></svg>
<span class="t" style="left:350px;top:669px;font-size:11px;color:#404040;letter-spacing:-0.097px;">Οικογ. Κατάσταση</span>
<div class="a" style="left:465px;top:665px;width:287px;height:19px;background:#f2f2f2;border:1px solid #ababab;"></div>
<span class="t" style="left:760.5px;top:669px;font-size:11px;color:#404040;">Δραστ</span>
<span class="t" style="left:29.5px;top:697px;font-size:11px;color:#404040;letter-spacing:-0.158px;">Διεύθυνση</span>
<div class="a" style="left:152px;top:693px;width:565px;height:19px;background:#f2f2f2;border:1px solid #ababab;"></div>
<span class="t" style="left:154px;top:697px;font-size:11px;color:#404040;letter-spacing:-0.685px;">ΦΑΡΣΑΛΩΝ</span>
<span class="t" style="left:725px;top:697px;font-size:11px;color:#404040;letter-spacing:-0.161px;">Πόλη</span>
<div class="a" style="left:758px;top:693px;width:60px;height:19px;background:#f2f2f2;border:1px solid #ababab;"></div>
<span class="t" style="left:760.5px;top:697px;font-size:11px;color:#404040;letter-spacing:-0.496px;">ΕΛΑΣΣΟΝΑ</span>
<span class="t" style="left:29.5px;top:725px;font-size:11px;color:#404040;letter-spacing:0.219px;">Τηλ.</span>
<div class="a" style="left:152px;top:721px;width:190px;height:19px;background:#f2f2f2;border:1px solid #ababab;"></div>
<span class="t" style="left:154.5px;top:725px;font-size:11px;color:#404040;letter-spacing:-0.215px;">2410579060</span>
<span class="t" style="left:350px;top:725px;font-size:11px;color:#404040;letter-spacing:0.397px;">Τηλ. 2</span>
<div class="a" style="left:465px;top:721px;width:287px;height:19px;background:#f2f2f2;border:1px solid #ababab;"></div>
<span class="t" style="left:468px;top:725px;font-size:11px;color:#404040;letter-spacing:-0.132px;">2410579061</span>
<span class="t" style="left:760.5px;top:725px;font-size:11px;color:#404040;">Κινητό</span>
<div class="a" style="left:3px;top:1013px;width:1920px;height:1px;background:#ababab;"></div>
<div class="a" style="left:1724px;top:982px;width:98px;height:26px;background:#fff;border:1px solid #ababab;"></div>
<div class="a" style="left:1822px;top:982px;width:98px;height:26px;background:#fff;border:1px solid #ababab;"></div>
<span class="t" style="left:1756.75px;top:990px;font-size:11px;color:#404040;letter-spacing:-0.580px;">Επικύρωση</span>
<span class="t" style="left:1858.5px;top:990px;font-size:11px;color:#404040;letter-spacing:-0.352px;">Ακύρωση</span>
<svg class="a" style="left:1738px;top:986.6px;" width="15" height="16" viewBox="0 0 15 16"><path d="M1 1.5 H11 L14 4.5 V15 H1 Z" fill="#cfe3f7" stroke="#8bb8e8" stroke-width="1"/><rect x="4" y="1.5" width="6.5" height="4.5" fill="#8bb8e8"/><rect x="7.8" y="2.2" width="1.6" height="3" fill="#fff"/><rect x="3.5" y="8.5" width="8" height="6.5" fill="#fff" stroke="#a8caee" stroke-width="0.7"/><path d="M5 10.5 H10 M5 12.5 H10" stroke="#a8caee" stroke-width="0.7"/></svg>
<svg class="a" style="left:1840px;top:987.6px;" width="14" height="14" viewBox="0 0 14 14"><path d="M1 1 L13 13 M13 1 L1 13" stroke="#9cc3ea" stroke-width="2.2" fill="none"/><path d="M1.6 1.6 L12.4 12.4 M12.4 1.6 L1.6 12.4" stroke="#d6e7f8" stroke-width="0.9" fill="none"/></svg>
<div class="a" style="left:781px;top:193px;width:1018px;height:726.5px;background:#f2f2f2;border:1px solid #3a3a3a;border-top:none;"></div>
<div class="a" style="left:781px;top:193px;width:1018px;height:30px;background:#464646;"></div>
<div class="a" style="left:781px;top:192px;width:1018px;height:1px;background:#fbfbfb;"></div>
<svg class="a" style="left:784px;top:199px;" width="17" height="17" viewBox="0 0 17 17"><g fill="none" stroke="#a8383c" stroke-width="0.9" stroke-linecap="round" opacity="0.9"><path d="M7.5 15.8 C3.5 13 0.6 10 1.2 7.6 C1.8 5.6 4.6 5.8 6 7.2"/><path d="M7.5 15.8 C11.5 12.5 15.2 8.2 14.8 4.6 C14.4 2.4 11.6 2.6 10.4 4"/><path d="M2 6.8 L6.8 6 L10.2 3.6 M6.6 6.2 L5.8 8.6"/><ellipse cx="5.9" cy="2.9" rx="1.7" ry="2.3" transform="rotate(-25 5.9 2.9)" fill="#b5322c" stroke="none"/><circle cx="9.4" cy="13.3" r="1.2" fill="#a8383c" stroke="none"/><path d="M9.6 13 L12 11.2"/></g></svg>
<span class="t" style="left:805px;top:201px;font-size:13px;color:#ffffff;letter-spacing:0.055px;">Αναζήτηση Υπόχρεου</span>
<div class="a" style="left:1691px;top:208px;width:8px;height:1px;background:#fff;"></div>
<div class="a" style="left:1733px;top:204px;width:8px;height:8px;border:1px solid #fff;"></div>
<svg class="a" style="left:1775px;top:204px;" width="8" height="8" viewBox="0 0 8 8"><path d="M0.4 0.4 L7.6 7.6 M7.6 0.4 L0.4 7.6" stroke="#fff" stroke-width="1.2"/></svg>
<div class="a" style="left:783px;top:224px;width:1014px;height:444px;background:#fff;border:1px solid #ababab;"></div>
<span class="t" style="left:792px;top:238px;font-size:11px;color:#a3a3a3;letter-spacing:-0.112px;">Σύρετε μια Στήλη για να ομαδοποιήσετε σύμφωνα μ&#x27;αυτή</span>
<div class="a" style="left:784px;top:259px;width:1012px;height:23px;background:#f2f2f2;border:1px solid #d2d2d2;border-left:none;border-right:none;"></div>
<div class="a" style="left:795px;top:260px;width:1px;height:21px;background:#d2d2d2;"></div>
<div class="a" style="left:939px;top:260px;width:1px;height:21px;background:#d2d2d2;"></div>
<div class="a" style="left:1230px;top:260px;width:1px;height:21px;background:#d2d2d2;"></div>
<div class="a" style="left:1422px;top:260px;width:1px;height:21px;background:#d2d2d2;"></div>
<div class="a" style="left:1587px;top:260px;width:1px;height:21px;background:#d2d2d2;"></div>
<div class="a" style="left:1795px;top:260px;width:1px;height:21px;background:#d2d2d2;"></div>
<span class="t" style="left:801px;top:268px;font-size:11px;color:#404040;letter-spacing:-0.193px;">Κωδικός</span>
<span class="t" style="left:945.5px;top:268px;font-size:11px;color:#404040;letter-spacing:-0.367px;">Επίθετο</span>
<span class="t" style="left:1237px;top:268px;font-size:11px;color:#404040;letter-spacing:-0.086px;">Όνομα</span>
<span class="t" style="left:1428.75px;top:268px;font-size:11px;color:#404040;letter-spacing:-0.018px;">Ημ/νία Γέννησης</span>
<span class="t" style="left:1593.75px;top:268px;font-size:11px;color:#404040;letter-spacing:-0.134px;">Όνομα Πατρός</span>
<svg class="a" style="left:921px;top:269px;" width="8" height="7" viewBox="0 0 8 7"><path d="M0 0.5 H8 M0 3.5 H5.5 M0 6.5 H3" stroke="#8a8a8a" stroke-width="1"/></svg>
<svg class="a" style="left:1212.5px;top:269px;" width="8" height="7" viewBox="0 0 8 7"><path d="M0 0.5 H3 M0 3.5 H5.5 M0 6.5 H8" stroke="#8a8a8a" stroke-width="1"/></svg>
<div class="a" style="left:796px;top:282px;width:1000px;height:21px;background:#dcdcdc;"></div>
<div class="a" style="left:784px;top:282px;width:11px;height:21px;background:#f2f2f2;"></div>
<div class="a" style="left:795px;top:282px;width:1px;height:21px;background:#cdcdcd;"></div>
<div class="a" style="left:939px;top:282px;width:1px;height:21px;background:#cdcdcd;"></div>
<div class="a" style="left:1230px;top:282px;width:1px;height:21px;background:#cdcdcd;"></div>
<div class="a" style="left:1422px;top:282px;width:1px;height:21px;background:#cdcdcd;"></div>
<div class="a" style="left:1587px;top:282px;width:1px;height:21px;background:#cdcdcd;"></div>
<div class="a" style="left:784px;top:303px;width:1012px;height:1px;background:#d2d2d2;"></div>
<svg class="a" style="left:784.5px;top:291.5px;" width="10" height="8" viewBox="0 0 10 8"><path d="M0.6 4 H9 M5.6 0.7 L9 4 L5.6 7.3" stroke="#1b6ec2" stroke-width="1.2" fill="none"/></svg>
<span class="t" style="left:797.5px;top:290px;font-size:11px;color:#404040;letter-spacing:-0.144px;">000020</span>
<span class="t" style="left:942px;top:290px;font-size:11px;color:#404040;letter-spacing:-0.652px;">ΔΟΥΜΠΙΩΤΗ</span>
<span class="t" style="left:1232.5px;top:290px;font-size:11px;color:#404040;letter-spacing:-0.357px;">ΜΙΧΑΛΙΑ</span>
<span class="t" style="left:1425.5px;top:290px;font-size:11px;color:#404040;letter-spacing:0.234px;">11/8/1957</span>
<span class="t" style="left:1588.5px;top:290px;font-size:11px;color:#404040;letter-spacing:-0.723px;">ΒΗΣΣΑΡΙΩΝ</span>
<div class="a" style="left:783px;top:667px;width:1014px;height:2px;background:#9d9d9d;"></div>
<div class="a" style="left:783px;top:669px;width:1014px;height:24px;background:#dedede;"></div>
<div class="a" style="left:783px;top:669px;width:1px;height:213px;background:#cfcfcf;"></div>
<div class="a" style="left:1796px;top:669px;width:1px;height:213px;background:#cfcfcf;"></div>
<span class="t" style="left:793px;top:676px;font-size:11px;color:#404040;font-weight:bold;letter-spacing:0.463px;">Φίλτρα</span>
<span class="t" style="left:799.5px;top:714px;font-size:11px;color:#404040;letter-spacing:-0.276px;">Κωδικός</span>
<div class="a" style="left:896px;top:709px;width:297px;height:19px;background:#fff;border:1px solid #ababab;"></div>
<span class="t" style="left:799.5px;top:740px;font-size:11px;color:#404040;letter-spacing:-0.198px;">Ονοματεπώνυμο</span>
<div class="a" style="left:896px;top:735px;width:297px;height:19px;background:#fff;border:1px solid #ababab;"></div>
<span class="t" style="left:898px;top:739px;font-size:11px;color:#404040;letter-spacing:-0.527px;">ΔΟΥΜ%</span>
<span class="t" style="left:799.5px;top:765px;font-size:11px;color:#404040;letter-spacing:-0.036px;">Ημ/νία Γέννησης</span>
<div class="a" style="left:896px;top:761px;width:297px;height:19px;background:#fff;border:1px solid #ababab;"></div>
<svg class="a" style="left:1179.25px;top:768.5px;" width="7" height="4" viewBox="0 0 7 4"><path d="M0.3 0.2 H6.7 L3.5 3.7 Z" fill="#5e5e5e"/></svg>
<div class="a" style="left:789px;top:852px;width:110px;height:25px;background:#fff;border:1px solid #ababab;"></div>
<span class="t" style="left:793px;top:859px;font-size:11px;color:#404040;letter-spacing:-0.259px;">Εφαρμογή Επιλογών</span>
<div class="a" style="left:903px;top:852px;width:109px;height:25px;background:#fff;border:1px solid #ababab;"></div>
<span class="t" style="left:928.5px;top:859px;font-size:11px;color:#404040;letter-spacing:-0.295px;">Εκκαθάριση</span>
<div class="a" style="left:1624px;top:874px;width:168px;height:1px;background:#b4b4b4;"></div>
<div class="a" style="left:782px;top:882px;width:1017px;height:1px;background:#c4c4c4;"></div>
<div class="a" style="left:1643px;top:845px;width:144px;height:23px;background:#fff;border:1px solid #ababab;"></div>
<svg class="a" style="left:1653px;top:848px;" width="16" height="16" viewBox="0 0 16 16"><path d="M8 0.6 V15.4 M0.6 8 H15.4" stroke="#a6c9ee" stroke-width="2.6" fill="none" stroke-linecap="round"/><path d="M8 1.6 V14.4 M1.6 8 H14.4" stroke="#cfe2f6" stroke-width="0.9" fill="none"/></svg>
<span class="t" style="left:1672.9px;top:851px;font-size:11px;color:#404040;letter-spacing:-0.279px;">Δημιουργία Υπόχρεου</span>
<div class="a" style="left:1515px;top:887px;width:137px;height:29px;background:#fff;border:1px solid #ababab;"></div>
<div class="a" style="left:1658px;top:887px;width:137px;height:29px;background:#fff;border:1px solid #ababab;"></div>
<svg class="a" style="left:1547.3px;top:893.3px;" width="15" height="16" viewBox="0 0 15 16"><path d="M1 1.5 H11 L14 4.5 V15 H1 Z" fill="#cfe3f7" stroke="#8bb8e8" stroke-width="1"/><rect x="4" y="1.5" width="6.5" height="4.5" fill="#8bb8e8"/><rect x="7.8" y="2.2" width="1.6" height="3" fill="#fff"/><rect x="3.5" y="8.5" width="8" height="6.5" fill="#fff" stroke="#a8caee" stroke-width="0.7"/><path d="M5 10.5 H10 M5 12.5 H10" stroke="#a8caee" stroke-width="0.7"/></svg>
<span class="t" style="left:1566px;top:896px;font-size:11px;color:#404040;letter-spacing:-0.530px;">Επικύρωση</span>
<svg class="a" style="left:1695px;top:894.5px;" width="14" height="14" viewBox="0 0 14 14"><path d="M1 1 L13 13 M13 1 L1 13" stroke="#9cc3ea" stroke-width="2.2" fill="none"/><path d="M1.6 1.6 L12.4 12.4 M12.4 1.6 L1.6 12.4" stroke="#d6e7f8" stroke-width="0.9" fill="none"/></svg>
<span class="t" style="left:1713.4px;top:896px;font-size:11px;color:#404040;letter-spacing:-0.335px;">Ακύρωση</span>
<div class="a" style="left:73px;top:505px;width:65px;height:37px;border:1px solid #d72c3a;z-index:50;box-shadow:inset 0 0 0 1px rgba(215,44,58,.55);"></div>
<div class="a" style="left:463.75px;top:546.25px;width:70.0px;height:24.25px;border:1px solid #d72c3a;z-index:50;box-shadow:inset 0 0 0 1px rgba(215,44,58,.55);"></div>
<div class="a" style="left:711.25px;top:546.25px;width:25.75px;height:22.25px;border:1px solid #d72c3a;z-index:50;box-shadow:inset 0 0 0 1px rgba(215,44,58,.55);"></div>
<div class="a" style="left:781px;top:282px;width:1017px;height:26px;border:1px solid #dc2432;z-index:50;box-shadow:inset 0 0 0 1px rgba(220,36,50,.55);"></div>
<div class="a" style="left:1511px;top:883px;width:146px;height:40px;border:1px solid #b82c3c;z-index:50;box-shadow:inset 0 0 0 1px rgba(184,44,60,.55);"></div>
<div class="a" style="left:1640px;top:841px;width:150px;height:31px;border:1px solid #e5212b;z-index:50;box-shadow:inset 0 0 0 1px rgba(229,33,43,.55);"></div>
<div class="a" style="left:62px;top:492px;width:22px;height:22px;background:#ea1c25;z-index:60;border-radius:50%;box-shadow:1.5px 2px 2px rgba(0,0,0,.45);"></div>
<span class="t" style="left:73px;top:497px;font-size:12px;color:#fff;font-weight:bold;transform:translateX(-50%);z-index:61;">1</span>
<div class="a" style="left:450.75px;top:531px;width:22px;height:22px;background:#ea1c25;z-index:60;border-radius:50%;box-shadow:1.5px 2px 2px rgba(0,0,0,.45);"></div>
<span class="t" style="left:461.75px;top:536px;font-size:12px;color:#fff;font-weight:bold;transform:translateX(-50%);z-index:61;">2</span>
<div class="a" style="left:696.5px;top:534px;width:22px;height:22px;background:#ea1c25;z-index:60;border-radius:50%;box-shadow:1.5px 2px 2px rgba(0,0,0,.45);"></div>
<span class="t" style="left:707.5px;top:539px;font-size:12px;color:#fff;font-weight:bold;transform:translateX(-50%);z-index:61;">3</span>
<div class="a" style="left:771px;top:270px;width:22px;height:22px;background:#ea1c25;z-index:60;border-radius:50%;box-shadow:1.5px 2px 2px rgba(0,0,0,.45);"></div>
<span class="t" style="left:782px;top:275px;font-size:12px;color:#fff;font-weight:bold;transform:translateX(-50%);z-index:61;">4</span>
<div class="a" style="left:1502px;top:872.5px;width:22px;height:22px;background:#ea1c25;z-index:60;border-radius:50%;box-shadow:1.5px 2px 2px rgba(0,0,0,.45);"></div>
<span class="t" style="left:1513px;top:878px;font-size:12px;color:#fff;font-weight:bold;transform:translateX(-50%);z-index:61;">5</span>
<div class="a" style="left:1627px;top:827px;width:22px;height:22px;background:#ea1c25;z-index:60;border-radius:50%;box-shadow:1.5px 2px 2px rgba(0,0,0,.45);"></div>
<span class="t" style="left:1638px;top:832px;font-size:12px;color:#fff;font-weight:bold;transform:translateX(-50%);z-index:61;">6</span>
</body></html>
